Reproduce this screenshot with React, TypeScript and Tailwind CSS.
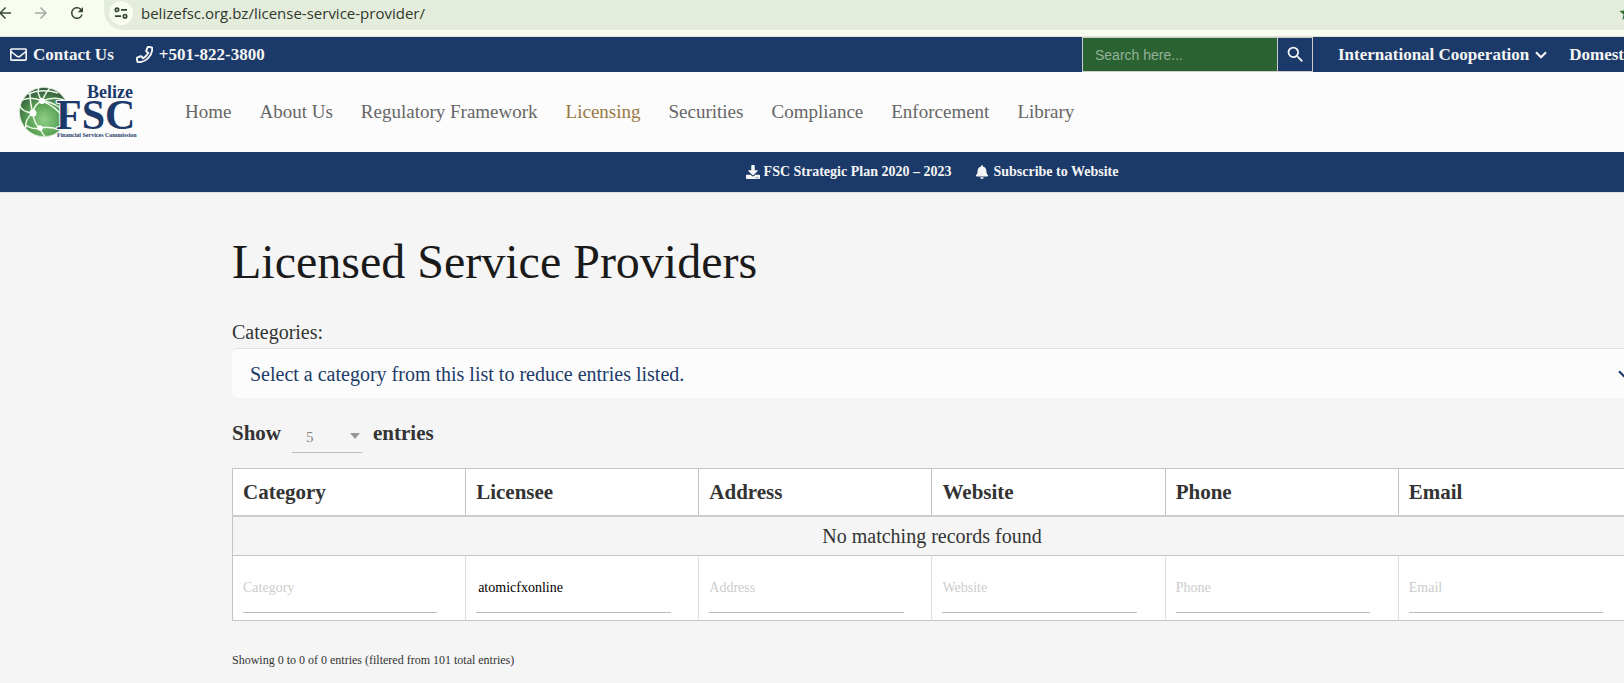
import { useState } from "react";
import { FaBell, FaDownload, FaRegEnvelope } from "react-icons/fa";
import { MdArrowBack, MdArrowForward, MdRefresh, MdSearch, MdStar } from "react-icons/md";

const navLinks = [
  "Home",
  "About Us",
  "Regulatory Framework",
  "Licensing",
  "Securities",
  "Compliance",
  "Enforcement",
  "Library",
];

const columns = ["Category", "Licensee", "Address", "Website", "Phone", "Email"];

function Chevron({ className }: { className?: string }) {
  return (
    <svg viewBox="0 0 12 8" className={className} fill="none" stroke="currentColor" strokeWidth="2.2" aria-hidden="true">
      <path d="M1 1.2 6 6.2 11 1.2" />
    </svg>
  );
}

function PhoneIcon() {
  return (
    <svg viewBox="-24 -24 560 560" className="size-[17px]" fill="none" stroke="currentColor" strokeWidth="64" aria-hidden="true">
      <path d="M493 25l-104-24c-11-3-23 3-27 14l-48 112c-4 10-2 21 7 28l60 49c-36 77-99 141-177 177l-49-60c-7-8-18-11-28-7l-112 48C4 367-2 378 1 389l24 104c2 11 12 19 23 19 256 0 464-208 464-464 0-11-8-21-19-23z" />
    </svg>
  );
}

function TuneIcon() {
  return (
    <svg viewBox="0 0 14 12" className="h-3 w-3.5" fill="none" stroke="#33452f" strokeWidth="1.7" aria-hidden="true">
      <circle cx="3" cy="2.8" r="1.7" />
      <path d="M7 2.8h6M1 9.2h6" />
      <circle cx="11" cy="9.2" r="1.7" />
    </svg>
  );
}

function Logo() {
  return (
    <svg viewBox="0 0 120 60" className="h-[60px] w-[120px]" role="img" aria-label="Belize FSC">
      <defs>
        <radialGradient id="globe" cx="0.5" cy="0.66" r="0.66">
          <stop offset="0" stopColor="#8fcf86" />
          <stop offset="0.5" stopColor="#5aa255" />
          <stop offset="1" stopColor="#2f5138" />
        </radialGradient>
      </defs>
      <g transform="translate(0 3)">
        <circle cx="26" cy="27" r="24.5" fill="url(#globe)" stroke="#d5ead0" strokeWidth="0.8" />
        <g fill="none" stroke="#eef8ea" strokeWidth="1.5">
          <path d="M4 15Q14 11 24 16Q36 11 46 15" />
          <path d="M24 16Q16 19 15 28Q4 27 2 21" />
          <path d="M24 16Q28 7 32 3M24 16Q18 7 21 3" />
          <path d="M24 16Q38 21 47 35M26 16Q38 18 49 28" />
          <path d="M15 28Q16 39 22 43Q32 41 42 45" />
          <path d="M15 28Q6 35 8 43M22 43Q24 49 27 51M12 8Q12 19 15 28" />
          <path d="M10 9Q24 3 40 8M8 40Q14 45 22 43" />
        </g>
        <g fill="#fff">
          <circle cx="24" cy="16" r="3" />
          <circle cx="15" cy="28" r="3.5" />
          <circle cx="22" cy="43" r="2.8" />
        </g>
      </g>
      <g fill="#1c3a69" fontFamily="'Liberation Serif', serif" fontWeight="700">
        <text x="69" y="16" fontSize="18">Belize</text>
        <text x="38" y="47" fontSize="42" stroke="#fcfcfc" strokeWidth="2" paintOrder="stroke">FSC</text>
        <text x="39" y="55" fontSize="6" stroke="#fcfcfc" strokeWidth="1" paintOrder="stroke">Financial Services Commission</text>
      </g>
    </svg>
  );
}

function BrowserBar() {
  return (
    <div className="flex h-[37px] items-start border-b border-[#dfe3d3] bg-[#f8fcf1] text-[#3b4a38]">
      <div className="flex h-[26px] w-[104px] shrink-0 items-center gap-[18px]">
        <button aria-label="Back" className="-ml-1"><MdArrowBack size={18} /></button>
        <button aria-label="Forward" className="text-[#a4aba0]"><MdArrowForward size={18} /></button>
        <button aria-label="Reload"><MdRefresh size={18} /></button>
      </div>
      <div className="flex h-[30px] min-w-0 flex-1 items-start rounded-bl-[20px] bg-[#e4ecdb]">
        <div className="flex h-[26px] flex-1 items-center">
          <button aria-label="Site information" className="ml-[5px] flex size-6 items-center justify-center rounded-full bg-[#f8fcf1]">
            <TuneIcon />
          </button>
          <input
            aria-label="Address"
            defaultValue="belizefsc.org.bz/license-service-provider/"
            className="ml-2 min-w-0 flex-1 bg-transparent font-['Open_Sans',sans-serif] text-[15px] leading-5 text-[#30382d] outline-none"
          />
          <MdStar size={18} className="-mr-3 shrink-0 text-[#2f6b33]" />
        </div>
      </div>
    </div>
  );
}

function TopBar() {
  return (
    <div className="flex h-[35px] items-center overflow-hidden bg-[#1c3a69] text-[17px] font-bold whitespace-nowrap text-[#f5f5f5]">
      <a href="#contact" className="ml-2.5 flex items-center gap-1.5">
        <FaRegEnvelope size={17} />
        Contact Us
      </a>
      <a href="tel:+5018223800" className="ml-[22px] flex items-center gap-1.5">
        <PhoneIcon />
        +501-822-3800
      </a>
      <div className="ml-auto flex h-full w-[542px] shrink-0 items-center">
        <form className="flex h-full shrink-0 border border-[#cccccc]" onSubmit={(e) => e.preventDefault()}>
          <input
            aria-label="Search"
            placeholder="Search here..."
            className="w-[195px] border-r border-[#cccccc] bg-[#2a6331] px-3 font-['Liberation_Sans',sans-serif] text-sm font-normal outline-none placeholder:text-[#94b198]"
          />
          <button aria-label="Submit search" className="flex w-[34px] items-center justify-center">
            <MdSearch size={21} />
          </button>
        </form>
        <a href="#international" className="ml-[25px] flex items-center gap-1.5">
          International Cooperation
          <Chevron className="h-2 w-3" />
        </a>
        <a href="#domestic" className="ml-[22px]">Domestic</a>
      </div>
    </div>
  );
}

function Header() {
  return (
    <header className="flex h-20 items-center bg-[#fcfcfc] pl-[18px]">
      <a href="#home"><Logo /></a>
      <nav className="ml-[47px] flex gap-7 text-[19px] whitespace-nowrap text-[#666666]">
        {navLinks.map((link) => (
          <a key={link} href="#nav" className={link === "Licensing" ? "text-[#9a7744]" : ""}>
            {link}
          </a>
        ))}
      </nav>
    </header>
  );
}

export default function App() {
  const [filters, setFilters] = useState<Record<string, string>>({ Licensee: "atomicfxonline" });

  return (
    <div className="min-h-screen overflow-hidden bg-[#f5f5f5] font-['Liberation_Serif',serif] text-[#333333]">
      <BrowserBar />
      <TopBar />
      <Header />
      <div className="flex h-[41px] items-center justify-center gap-6 border-b border-[#e0e0e0] bg-[#1c3a69] pl-[240px] text-sm font-bold text-[#f5f5f5]">
        <a href="#plan" className="flex items-center gap-1">
          <FaDownload size={14} />
          FSC Strategic Plan 2020 – 2023
        </a>
        <a href="#subscribe" className="flex items-center gap-1">
          <FaBell size={14} />
          Subscribe to Website
        </a>
      </div>

      <main className="-mr-2 ml-[232px] pt-[39px]">
        <h1 className="text-5xl leading-[60px] text-[#1a1a1a]">Licensed Service Providers</h1>

        <label htmlFor="category" className="mt-7 block text-xl leading-6">Categories:</label>
        <div className="relative mt-1">
          <select
            id="category"
            className="block h-[50px] w-full appearance-none rounded-md border-t border-[#e2e2e2] bg-[#fcfcfc] px-[18px] text-xl text-[#1c3a69] outline-none"
          >
            <option>Select a category from this list to reduce entries listed.</option>
          </select>
          <Chevron className="pointer-events-none absolute top-[22px] right-0.5 h-2 w-3 text-[#1c3a69]" />
        </div>

        <label className="mt-[18px] flex h-[38px] text-[21px] leading-[34px] font-bold">
          Show
          <span className="relative mx-[11px]">
            <select className="block h-[37px] w-[70px] appearance-none border-b border-[#bbbbbb] bg-transparent pt-1 pl-3.5 text-[15px] font-normal text-[#888888] outline-none">
              <option>5</option>
            </select>
            <svg viewBox="0 0 10 6" className="pointer-events-none absolute top-[17px] right-0.5 h-1.5 w-2.5 fill-[#999999]" aria-hidden="true">
              <path d="M0 0h10L5 6z" />
            </svg>
          </span>
          entries
        </label>

        <table className="mt-[14px] w-full table-fixed border-collapse border border-[#c4c4c4]">
          <thead>
            <tr className="h-[47px] border-b-2 border-[#cccccc] bg-white text-left text-[21px] leading-6">
              {columns.map((col) => (
                <th key={col} className="border-x border-[#c4c4c4] px-2.5">{col}</th>
              ))}
            </tr>
          </thead>
          <tbody>
            <tr className="h-[40px] border-b border-[#c4c4c4]">
              <td colSpan={columns.length} className="text-center text-xl leading-6">
                No matching records found
              </td>
            </tr>
          </tbody>
          <tfoot>
            <tr className="h-[65px] bg-white">
              {columns.map((col) => (
                <td key={col} className="border-x border-x-[#dddddd] px-2.5 first:border-l-[#c4c4c4]">
                  <input
                    aria-label={`Filter by ${col}`}
                    placeholder={col}
                    value={filters[col] ?? ""}
                    onChange={(e) => setFilters({ ...filters, [col]: e.target.value })}
                    className="block h-[50px] w-11/12 border-b border-[#bbbbbb] text-sm text-black outline-none not-placeholder-shown:px-0.5 placeholder:text-[#cccccc]"
                  />
                </td>
              ))}
            </tr>
          </tfoot>
        </table>

        <p className="mt-[27px] pb-3 text-xs leading-6">Showing 0 to 0 of 0 entries (filtered from 101 total entries)</p>
      </main>
    </div>
  );
}
